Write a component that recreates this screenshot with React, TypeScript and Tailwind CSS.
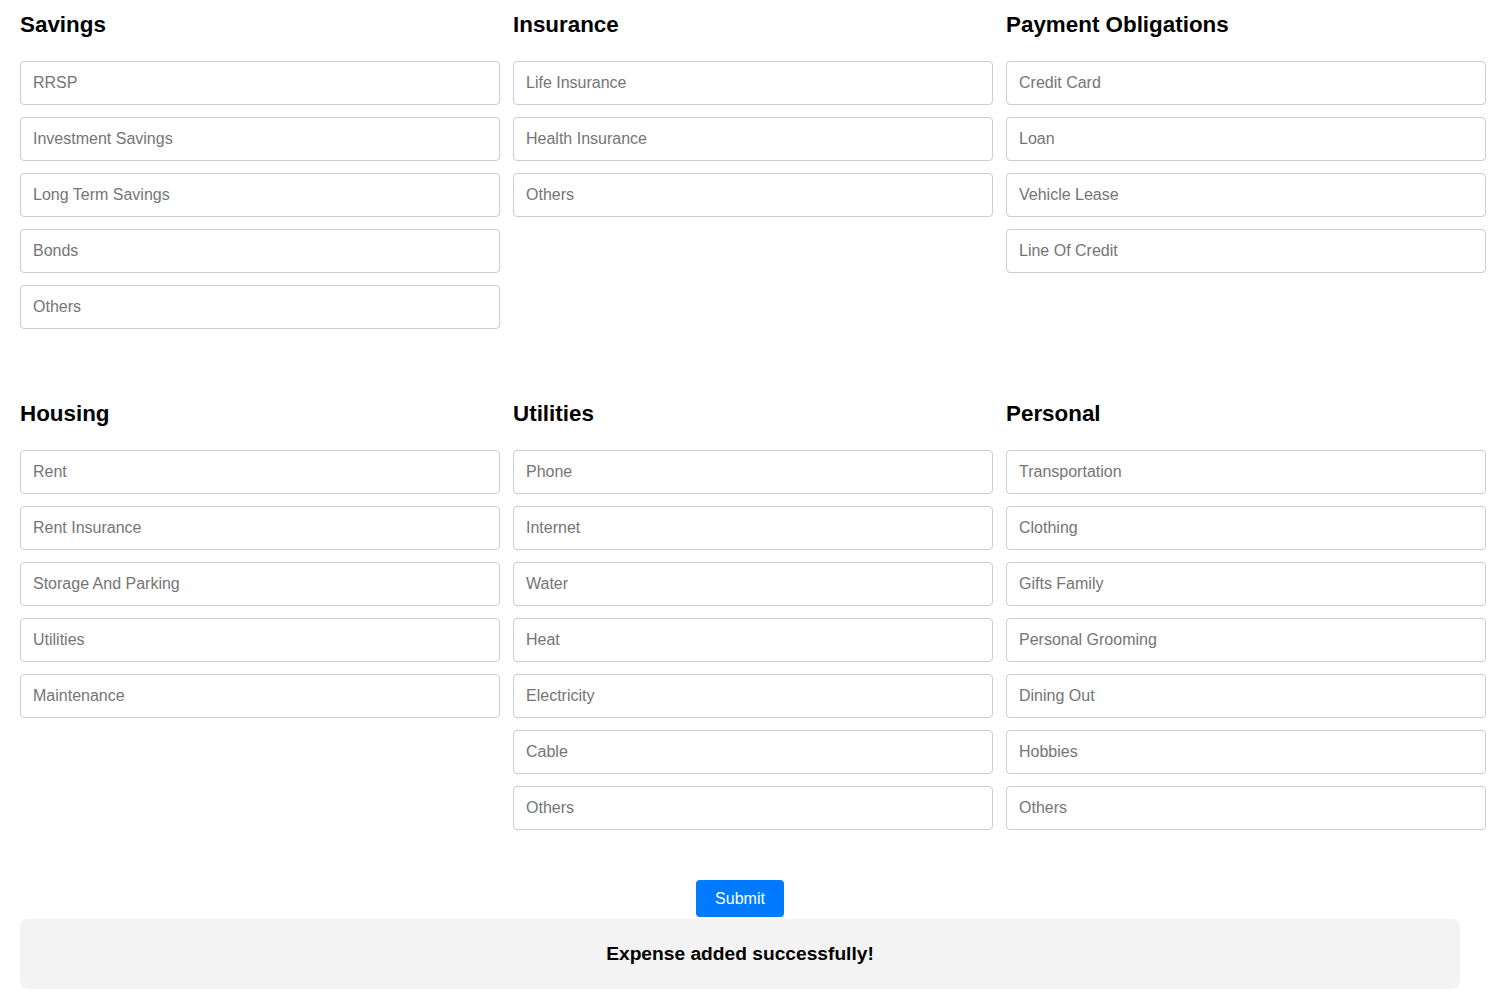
import React from "react";

const rows: { title: string; items: string[] }[][] = [
  [
    { title: "Savings", items: ["RRSP", "Investment Savings", "Long Term Savings", "Bonds", "Others"] },
    { title: "Insurance", items: ["Life Insurance", "Health Insurance", "Others"] },
    { title: "Payment Obligations", items: ["Credit Card", "Loan", "Vehicle Lease", "Line Of Credit"] },
  ],
  [
    { title: "Housing", items: ["Rent", "Rent Insurance", "Storage And Parking", "Utilities", "Maintenance"] },
    { title: "Utilities", items: ["Phone", "Internet", "Water", "Heat", "Electricity", "Cable", "Others"] },
    {
      title: "Personal",
      items: ["Transportation", "Clothing", "Gifts Family", "Personal Grooming", "Dining Out", "Hobbies", "Others"],
    },
  ],
];

function Section({ title, items }: { title: string; items: string[] }) {
  return (
    <div className="flex flex-col">
      <h2 className="text-[22.4px] leading-[25px] font-bold text-black mb-[24px]">{title}</h2>
      <div className="flex flex-col gap-[12px]">
        {items.map((it, i) => (
          <input
            key={i}
            placeholder={it}
            className="h-[44px] w-full rounded-[4px] border border-[#cccccc] bg-white px-[12px] text-[16px] text-[#333] placeholder:text-[#757575] outline-none"
          />
        ))}
      </div>
    </div>
  );
}

export default function App() {
  return (
    <div className="bg-white min-h-[999px] pt-[12px] px-[20px]" style={{ fontFamily: '"Liberation Sans", Arial, sans-serif' }}>
      <div className="flex flex-col gap-[72px]">
        {rows.map((row, r) => (
          <div key={r} className="grid grid-cols-[480px_480px_480px] gap-x-[13px] items-start">
            {row.map((s) => (
              <Section key={s.title} title={s.title} items={s.items} />
            ))}
          </div>
        ))}
      </div>
      <div className="w-[1440px] flex flex-col items-center mt-[50px]">
        <button className="h-[37px] w-[88px] rounded-[4px] bg-[#007bff] text-white text-[16px]">Submit</button>
        <div className="mt-[2px] w-[1440px] h-[70px] rounded-[8px] bg-[#f3f3f3] flex items-center justify-center">
          <span className="text-[19.2px] font-bold text-black">Expense added successfully!</span>
        </div>
      </div>
    </div>
  );
}
